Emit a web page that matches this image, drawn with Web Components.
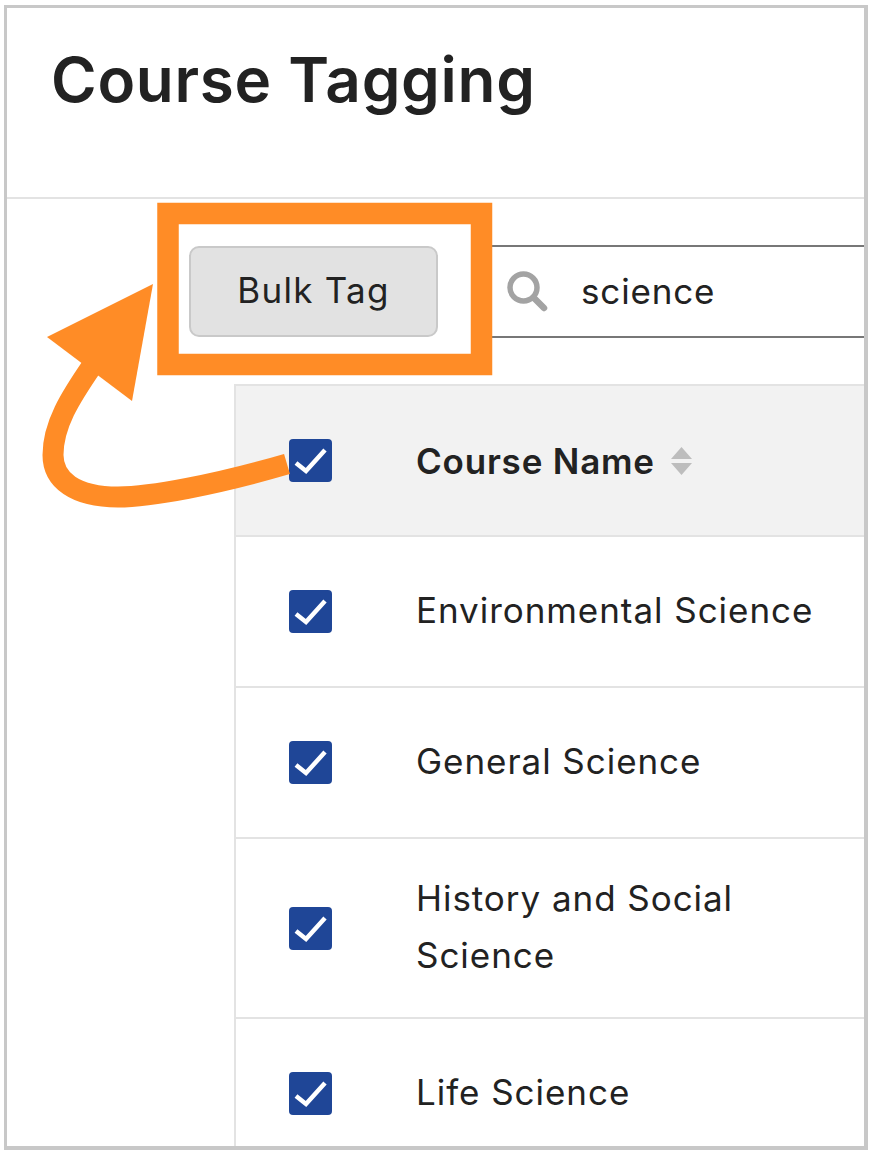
<!DOCTYPE html>
<html>
<head>
<meta charset="utf-8">
<title>Course Tagging</title>
<style>
  html, body { margin: 0; background: #fff; }
  body { font-family: Inter, Lato, sans-serif; color: #222; }
</style>
</head>
<body>
<tag-page>
  <page-title slot="title">Course Tagging</page-title>
  <bulk-button slot="button">Bulk Tag</bulk-button>
  <search-box slot="search">science</search-box>
  <course-row header>Course Name</course-row>
  <course-row>Environmental Science</course-row>
  <course-row>General Science</course-row>
  <course-row tall>History and Social<br>Science</course-row>
  <course-row last>Life Science</course-row>
</tag-page>
<script>
class TagPage extends HTMLElement {
  constructor() {
    super();
    this.attachShadow({ mode: 'open' }).innerHTML = `
      <style>
        :host {
          display: flex;
          flex-direction: column;
          box-sizing: border-box;
          position: relative;
          width: 864px;
          height: 1145px;
          margin: 5px 0 0 4px;
          border: 3px solid #c8c8c8;
          border-right-width: 4px;
          border-bottom-width: 4px;
          overflow: hidden;
        }
        .head { height: 189px; flex: none; border-bottom: 2px solid #e3e3e3; box-sizing: content-box; }
        .bar {
          display: flex;
          align-items: center;
          flex: none;
          height: 93px;
          margin-top: 46px;
          padding-left: 182px;
          gap: 54px;
        }
        .table {
          flex: 1;
          margin: 46px 0 0 227px;
          border-left: 2px solid #e3e3e3;
          border-top: 2px solid #e3e3e3;
        }
        .callout { position: absolute; left: 0; top: 0; pointer-events: none; }
      </style>
      <div class="head"><slot name="title"></slot></div>
      <div class="bar"><slot name="button"></slot><slot name="search"></slot></div>
      <div class="table"><slot></slot></div>
      <svg class="callout" width="857" height="1138" viewBox="7 8 857 1138">
        <rect x="168" y="213.500" width="313.500" height="151" fill="none" stroke="#ff8c26" stroke-width="21.500"/>
        <path d="M287 464 C215 485 150 497 118 497 C75 497 53 480 53 455 C53 425 70 398 92 366" fill="none" stroke="#ff8c26" stroke-width="21"/>
        <path d="M153 284 L47 337 L132 401 Z" fill="#ff8c26"/>
      </svg>`;
  }
}

class PageTitle extends HTMLElement {
  constructor() {
    super();
    this.attachShadow({ mode: 'open' }).innerHTML = `
      <style>
        :host {
          display: block;
          padding: 35px 0 0 44px;
          font: 600 62px/74px Inter, sans-serif;
          letter-spacing: 0.700px;
          color: #222;
        }
      </style><slot></slot>`;
  }
}

class BulkButton extends HTMLElement {
  constructor() {
    super();
    this.attachShadow({ mode: 'open' }).innerHTML = `
      <style>
        :host {
          display: flex;
          align-items: center;
          justify-content: center;
          box-sizing: border-box;
          width: 249px;
          height: 91px;
          padding-bottom: 4px;
          background: #e2e2e2;
          border: 2px solid #c9c9c9;
          border-radius: 10px;
          font: 35px Inter, sans-serif;
          letter-spacing: 1.250px;
          color: #222;
        }
      </style><slot></slot>`;
  }
}

class SearchBox extends HTMLElement {
  constructor() {
    super();
    this.attachShadow({ mode: 'open' }).innerHTML = `
      <style>
        :host {
          display: flex;
          align-items: center;
          box-sizing: border-box;
          width: 372px;
          height: 93px;
          border-top: 2.500px solid #777;
          border-bottom: 2.500px solid #777;
          padding: 0 0 2px 15px;
          gap: 33px;
          font: 35px Inter, sans-serif;
          letter-spacing: 0.850px;
          color: #222;
        }
        svg { flex: none; margin-top: 2px; }
      </style>
      <svg width="41" height="41" viewBox="0 0 41 41" fill="none" stroke="#a3a3a3">
        <circle cx="16.500" cy="16.500" r="13.500" stroke-width="5.500"/>
        <path d="M27 27 L37 37" stroke-width="6.500" stroke-linecap="round"/>
      </svg>
      <slot></slot>`;
  }
}

class CheckBox extends HTMLElement {
  constructor() {
    super();
    this.attachShadow({ mode: 'open' }).innerHTML = `
      <style>
        :host {
          display: flex;
          flex: none;
          width: 43px;
          height: 43px;
          border-radius: 4px;
          background: #1f4697;
        }
      </style>
      <svg width="43" height="43" viewBox="0 0 43 43" fill="none">
        <path d="M7 24 L17 32 L36 11" stroke="#fff" stroke-width="4.500"/>
      </svg>`;
  }
}

class CourseRow extends HTMLElement {
  constructor() {
    super();
    this.attachShadow({ mode: 'open' }).innerHTML = `
      <style>
        :host {
          display: flex;
          align-items: center;
          box-sizing: border-box;
          height: 151px;
          padding-left: 53px;
          gap: 84px;
          font: 35px/57px Inter, sans-serif;
          letter-spacing: 0.950px;
          color: #222;
          border-bottom: 2px solid #e3e3e3;
        }
        :host([header]) { background: #f2f2f2; font-weight: 600; letter-spacing: 0.800px; }
        :host([tall]) { height: 180px; }
        :host([last]) { height: 148px; border-bottom: 0; }
        .sort { display: none; margin-left: 15px; }
        :host([header]) .sort { display: block; }
        .label { display: flex; align-items: center; margin-top: -2px; }
        :host([header]) .label { margin-top: 1px; }
      </style>
      <check-box></check-box>
      <div class="label">
        <div><slot></slot></div>
        <svg class="sort" width="23" height="30" viewBox="0 0 23 30" fill="#bdbdbd">
          <path d="M11.500 1 L22 13 H1 Z"/>
          <path d="M11.500 29 L22 17 H1 Z"/>
        </svg>
      </div>`;
  }
}

customElements.define('tag-page', TagPage);
customElements.define('page-title', PageTitle);
customElements.define('bulk-button', BulkButton);
customElements.define('search-box', SearchBox);
customElements.define('check-box', CheckBox);
customElements.define('course-row', CourseRow);
</script>
</body>
</html>
